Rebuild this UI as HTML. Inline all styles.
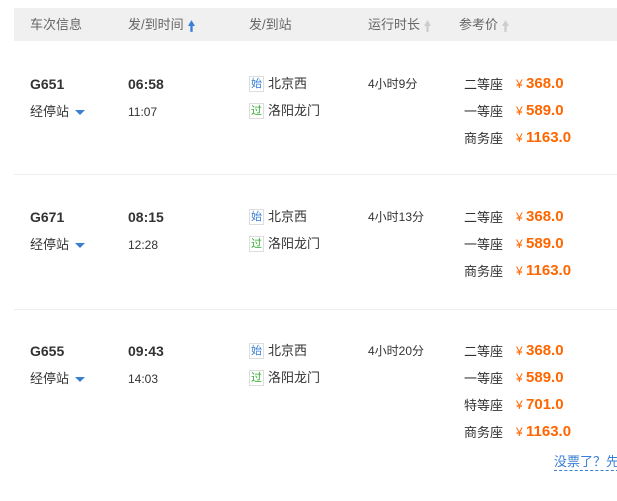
<!DOCTYPE html><html><head><meta charset="utf-8"><style>
body{margin:0;width:617px;height:501px;background:#fff;font-family:"Liberation Sans","Noto Sans CJK SC",sans-serif;font-size:13px;color:#333;position:relative;overflow:hidden}
.a{position:absolute;white-space:nowrap;line-height:16px}
.hd{position:absolute;left:14px;top:8px;width:603px;height:33px;background:#f0f0f0}
.h{color:#666;top:17px}
.b{font-weight:bold;font-size:14px;color:#333}
.p{color:#f60;font-weight:bold;font-size:15px}
.y{color:#f60;font-size:12px}
.t{display:inline-block;width:13px;height:14px;border:1px solid #ddd;font-size:11px;line-height:14px;text-align:center;margin-right:4px;vertical-align:top}
.line{position:absolute;left:14px;width:603px;height:1px;background:#eee}
.tri{display:inline-block;border:5px solid transparent;border-top:5px solid #3a7fd5;border-bottom:0;margin-left:6px;vertical-align:middle}
.up{display:inline-block;width:7px;height:12px;margin-left:4px;vertical-align:middle}
</style></head><body>
<div class="hd"></div>
<div class="a h" style="left:30px">车次信息</div>
<div class="a h" style="left:128px">发/到时间<svg class="up" viewBox="0 0 6 10"><path d="M3 0L6 5H4V10H2V5H0Z" fill="#3a7fd5"/></svg></div>
<div class="a h" style="left:249px">发/到站</div>
<div class="a h" style="left:368px">运行时长<svg class="up" viewBox="0 0 6 10"><path d="M3 0L6 5H4V10H2V5H0Z" fill="#ccc"/></svg></div>
<div class="a h" style="left:459px">参考价<svg class="up" viewBox="0 0 6 10"><path d="M3 0L6 5H4V10H2V5H0Z" fill="#ccc"/></svg></div>

<div class="a b" style="left:30px;top:76px">G651</div>
<div class="a" style="left:30px;top:104px">经停站<span class="tri"></span></div>
<div class="a b" style="left:128px;top:76px">06:58</div>
<div class="a" style="left:128px;top:104px;font-size:12px">11:07</div>
<div class="a" style="left:249px;top:76px"><span class="t" style="color:#3a7fd5">始</span>北京西</div>
<div class="a" style="left:249px;top:103px"><span class="t" style="color:#3a3">过</span>洛阳龙门</div>
<div class="a" style="left:368px;top:76px;font-size:12px">4小时9分</div>
<div class="a" style="left:464px;top:77px">二等座</div><div class="a" style="left:516px;top:76px"><span class="y">¥ </span><span class="p">368.0</span></div>
<div class="a" style="left:464px;top:104px">一等座</div><div class="a" style="left:516px;top:103px"><span class="y">¥ </span><span class="p">589.0</span></div>
<div class="a" style="left:464px;top:131px">商务座</div><div class="a" style="left:516px;top:130px"><span class="y">¥ </span><span class="p">1163.0</span></div>
<div class="line" style="top:174px"></div>

<div class="a b" style="left:30px;top:209px">G671</div>
<div class="a" style="left:30px;top:237px">经停站<span class="tri"></span></div>
<div class="a b" style="left:128px;top:209px">08:15</div>
<div class="a" style="left:128px;top:237px;font-size:12px">12:28</div>
<div class="a" style="left:249px;top:209px"><span class="t" style="color:#3a7fd5">始</span>北京西</div>
<div class="a" style="left:249px;top:236px"><span class="t" style="color:#3a3">过</span>洛阳龙门</div>
<div class="a" style="left:368px;top:209px;font-size:12px">4小时13分</div>
<div class="a" style="left:464px;top:210px">二等座</div><div class="a" style="left:516px;top:209px"><span class="y">¥ </span><span class="p">368.0</span></div>
<div class="a" style="left:464px;top:237px">一等座</div><div class="a" style="left:516px;top:236px"><span class="y">¥ </span><span class="p">589.0</span></div>
<div class="a" style="left:464px;top:264px">商务座</div><div class="a" style="left:516px;top:263px"><span class="y">¥ </span><span class="p">1163.0</span></div>
<div class="line" style="top:309px"></div>

<div class="a b" style="left:30px;top:343px">G655</div>
<div class="a" style="left:30px;top:371px">经停站<span class="tri"></span></div>
<div class="a b" style="left:128px;top:343px">09:43</div>
<div class="a" style="left:128px;top:371px;font-size:12px">14:03</div>
<div class="a" style="left:249px;top:343px"><span class="t" style="color:#3a7fd5">始</span>北京西</div>
<div class="a" style="left:249px;top:370px"><span class="t" style="color:#3a3">过</span>洛阳龙门</div>
<div class="a" style="left:368px;top:343px;font-size:12px">4小时20分</div>
<div class="a" style="left:464px;top:344px">二等座</div><div class="a" style="left:516px;top:343px"><span class="y">¥ </span><span class="p">368.0</span></div>
<div class="a" style="left:464px;top:371px">一等座</div><div class="a" style="left:516px;top:370px"><span class="y">¥ </span><span class="p">589.0</span></div>
<div class="a" style="left:464px;top:398px">特等座</div><div class="a" style="left:516px;top:397px"><span class="y">¥ </span><span class="p">701.0</span></div>
<div class="a" style="left:464px;top:425px">商务座</div><div class="a" style="left:516px;top:424px"><span class="y">¥ </span><span class="p">1163.0</span></div>
<div class="a" style="left:554px;top:454px;color:#3a7fd5;border-bottom:1px dashed #3a7fd5">没票了？先</div>
</body></html>
